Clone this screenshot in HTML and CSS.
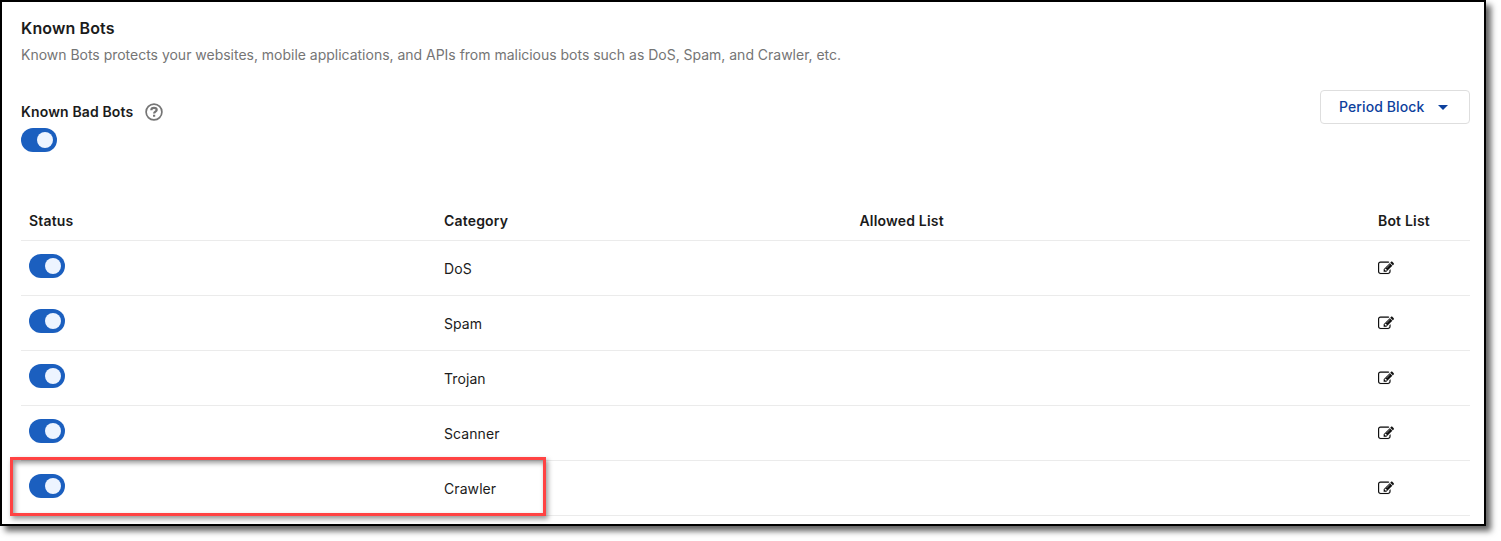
FILE: index.html
```html
<!DOCTYPE html>
<html lang="en">
<head>
<meta charset="utf-8">
<title>Known Bots</title>
<link rel="stylesheet" href="styles.css">
</head>
<body>
<svg class="defs" width="0" height="0" aria-hidden="true">
  <symbol id="edit" viewBox="0 -40 1792 1792"><path d="M888 1184l116-116-152-152-116 116v56h96v96h56zm440-720q-16-16-33 1l-350 350q-17 17-1 33t33-1l350-350q17-17 1-33zm80 594v190q0 119-84.5 203.5t-203.5 84.5h-832q-119 0-203.5-84.5t-84.5-203.5v-832q0-119 84.5-203.5t203.5-84.5h832q63 0 117 25 15 7 18 23 3 17-9 29l-49 49q-14 14-32 8-23-6-45-6h-832q-66 0-113 47t-47 113v832q0 66 47 113t113 47h832q66 0 113-47t47-113v-126q0-13 9-22l64-64q15-15 35-7t20 29zm-96-738l288 288-672 672h-288v-288zm444 132l-92 92-288-288 92-92q28-28 68-28t68 28l152 152q28 28 28 68t-28 68z"/></symbol>
</svg>
<main class="panel">
  <h1 class="title">Known Bots</h1>
  <p class="desc">Known Bots protects your websites, mobile applications, and APIs from malicious bots such as DoS, Spam, and Crawler, etc.</p>
  <section class="bar">
    <div class="setting">
      <div class="label"><span>Known Bad Bots</span>
        <svg class="help" viewBox="0 0 18 18"><circle cx="9" cy="9" r="7.9"/><path class="mark" d="M6.3 7.2C6.3 5.6 7.5 4.9 9 4.9s2.7.8 2.7 2.1c0 1.7-2.6 1.7-2.6 3.5M9.1 11.8v2"/></svg>
      </div>
      <span class="toggle"></span>
    </div>
    <button class="select" type="button"><span>Period Block</span><i class="caret"></i></button>
  </section>
  <div class="table">
    <div class="row head"><span>Status</span><span>Category</span><span>Allowed List</span><span>Bot List</span></div>
    <div class="row"><span class="toggle"></span><span>DoS</span><span></span><svg class="edit"><use href="#edit"/></svg></div>
    <div class="row"><span class="toggle"></span><span>Spam</span><span></span><svg class="edit"><use href="#edit"/></svg></div>
    <div class="row"><span class="toggle"></span><span>Trojan</span><span></span><svg class="edit"><use href="#edit"/></svg></div>
    <div class="row"><span class="toggle"></span><span>Scanner</span><span></span><svg class="edit"><use href="#edit"/></svg></div>
    <div class="row marked"><span class="toggle"></span><span>Crawler</span><span></span><svg class="edit"><use href="#edit"/></svg></div>
  </div>
</main>
</body>
</html>
```
FILE: styles.css
```css
*, *::before, *::after { box-sizing: border-box; }
html { background: #fff; }
body { margin: 0; height: 541px; background: #fff; font: 14px/20px Inter, "Liberation Sans", sans-serif; color: #1b1b1b; overflow: hidden; }
.defs { position: absolute; }
.panel { width: 1486px; height: 526px; border: 2px solid #000; padding: 16px 14px 0 19px; background: #fff; box-shadow: 5px 5px 6px rgba(0, 0, 0, .62); }
.title { margin: 0; font-size: 16px; font-weight: 600; line-height: 20px; letter-spacing: .13px; }
.desc { margin: 7px 0 0; color: #757575; letter-spacing: -.014px; }
.bar { display: flex; justify-content: space-between; align-items: flex-start; margin-top: 25px; height: 112px; }
.setting { padding-top: 12px; }
.label { display: flex; align-items: center; gap: 12px; height: 20px; font-weight: 600; letter-spacing: .14px; margin-bottom: 6px; }
.help { width: 18px; height: 18px; fill: none; stroke: #757575; stroke-width: 1.7; }
.mark { stroke-width: 2.2; }
.toggle { display: block; width: 36px; height: 24px; padding: 4px 4px 4px 16px; border-radius: 12px; background: #1b5fbf; }
.toggle::before { content: ""; display: block; width: 16px; height: 16px; border-radius: 50%; background: #edf4ff; }
.select { display: flex; align-items: center; gap: 14px; width: 150px; height: 34px; padding: 0 18px; border: 1px solid #dedede; border-radius: 4px; background: #fff; color: #0d419d; font: 500 14px/20px Inter, "Liberation Sans", sans-serif; letter-spacing: .1px; }
.caret { border: 5px solid transparent; border-top-color: #0d419d; border-bottom: 0; }
.row { position: relative; display: grid; grid-template-columns: 415px 415.5px 518.5px 1fr; height: 55px; padding: 13px 0 0 8px; border-bottom: 1px solid #ebebeb; line-height: 30px; letter-spacing: .08px; }
.head { height: 39px; padding-top: 9px; font-weight: 600; line-height: 20px; letter-spacing: .18px; }
.edit { width: 16px; height: 16px; margin-top: 6px; fill: #111; stroke: #111; stroke-width: 12; }
.marked::after { content: ""; position: absolute; left: -11px; top: -4px; width: 536px; height: 59px; border: 3px solid #ff4343; box-shadow: 2px 3px 5px rgba(0, 0, 0, .4), inset 2px 3px 5px rgba(0, 0, 0, .4); }
```
